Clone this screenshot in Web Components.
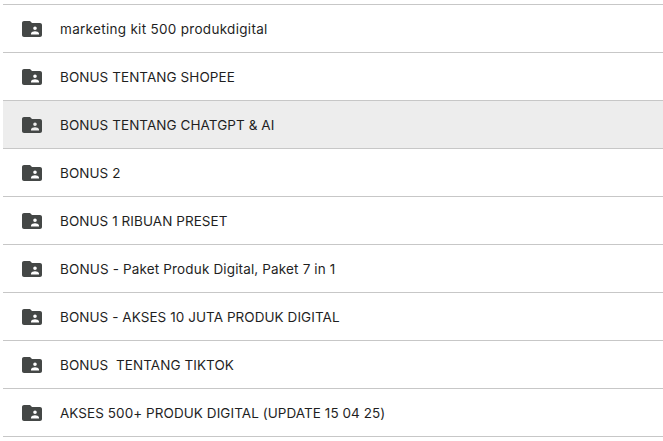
<!DOCTYPE html>
<html><head><meta charset="utf-8"><style>
html,body{margin:0;background:#fff}
body{font-family:Inter,Roboto,"Liberation Sans",sans-serif;color:#1f1f1f;overflow:hidden}
</style></head><body>
<folder-list>
<folder-row style="--track:.3px">marketing kit 500 produkdigital</folder-row>
<folder-row>BONUS TENTANG SHOPEE</folder-row>
<folder-row selected>BONUS TENTANG CHATGPT &amp; AI</folder-row>
<folder-row>BONUS 2</folder-row>
<folder-row>BONUS 1 RIBUAN PRESET</folder-row>
<folder-row style="--track:.15px">BONUS - Paket Produk Digital, Paket 7 in 1</folder-row>
<folder-row>BONUS - AKSES 10 JUTA PRODUK DIGITAL</folder-row>
<folder-row>BONUS &nbsp;TENTANG TIKTOK</folder-row>
<folder-row>AKSES 500+ PRODUK DIGITAL (UPDATE 15 04 25)</folder-row>
</folder-list>
<script>
class FolderList extends HTMLElement {
  constructor() {
    super();
    this.attachShadow({ mode: 'open' }).innerHTML = `
      <style>:host{display:block;margin:4px 0 0 3px}
      .wrap{border-top:1px solid #c7c7c7}</style>
      <div class="wrap"><slot></slot></div>`;
  }
}
class FolderRow extends HTMLElement {
  constructor() {
    super();
    this.attachShadow({ mode: 'open' }).innerHTML = `
      <style>
      :host{display:flex;align-items:center;height:47px;border-bottom:1px solid #c7c7c7;font-size:13.5px;letter-spacing:var(--track,.06px)}
      :host([selected]){background:#ededed}
      svg{width:24px;height:24px;margin:0 16px 0 17px;fill:#444746;flex:none}
      </style>
      <svg viewBox="0 0 24 24"><path fill-rule="evenodd" d="M20 6h-8l-2-2H4c-1.100 0-2 .9-2 2v12c0 1.100.9 2 2 2h16c1.100 0 2-.9 2-2V8c0-1.100-.9-2-2-2zM15 9.500a1.800 1.800 0 1 1 0 3.600 1.800 1.800 0 0 1 0-3.600zM11 17.500v-1c0-1.500 2.700-2.200 4-2.200s4 .7 4 2.200v1z"/></svg>
      <slot></slot>`;
  }
}
customElements.define('folder-list', FolderList);
customElements.define('folder-row', FolderRow);
</script>
</body></html>
